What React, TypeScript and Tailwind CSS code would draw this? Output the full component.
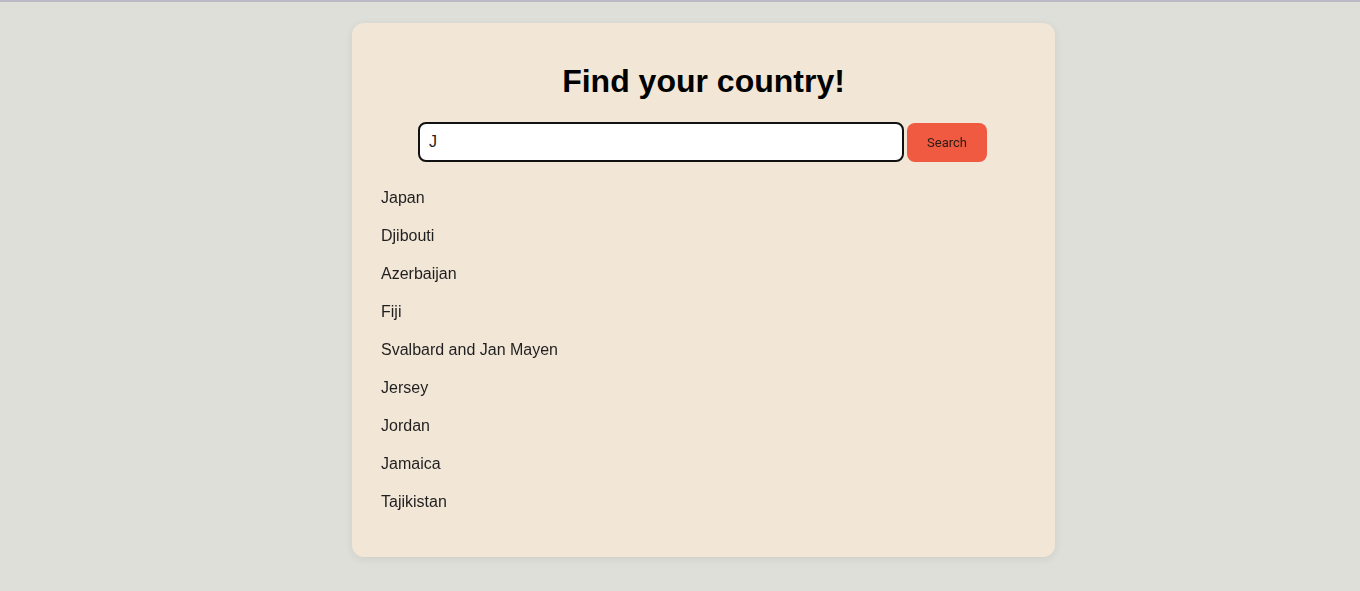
import { useState } from "react";

const countries = [
  "Japan",
  "Djibouti",
  "Azerbaijan",
  "Fiji",
  "Svalbard and Jan Mayen",
  "Jersey",
  "Jordan",
  "Jamaica",
  "Tajikistan",
];

export default function App() {
  const [query, setQuery] = useState("J");

  return (
    <div className="min-h-[591px] bg-[#dfdfda] font-['Liberation_Sans',Arial,sans-serif] border-t-2 border-[#b9b9c8]">
      <div className="pt-[21px] pl-[47px] flex justify-center">
        <div className="w-[703px] rounded-xl bg-[#f2e6d7] shadow-[0_2px_8px_rgba(0,0,0,0.08)] px-[29px] pt-[40px] pb-[36px]">
          <h1 className="text-center text-[32px] leading-[37px] font-bold text-black">
            Find your country!
          </h1>
          <div className="mt-[22px] pr-[2px] flex justify-center gap-[3px]">
            <input
              value={query}
              onChange={(e) => setQuery(e.target.value)}
              autoFocus
              className="w-[486px] h-10 rounded-lg border-2 border-[#111] bg-white px-[9px] text-base text-[#222] caret-[#8b1a1a] outline-none"
            />
            <button className="w-20 h-[39px] mt-px rounded-lg bg-[#f05a40] text-[13px] text-[#2a1a17] font-['Roboto',sans-serif]">
              Search
            </button>
          </div>
          <ul className="mt-[17px]">
            {countries.map((c) => (
              <li key={c} className="h-[38px] flex items-center text-base text-[#1f1f1f]">
                {c}
              </li>
            ))}
          </ul>
        </div>
      </div>
    </div>
  );
}
